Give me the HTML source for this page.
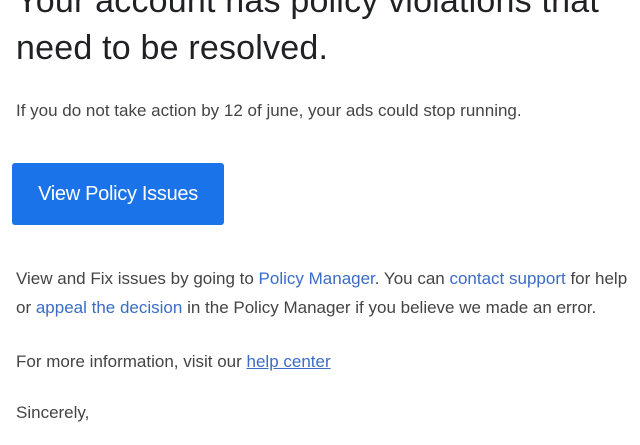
<!DOCTYPE html>
<html><head><meta charset="utf-8"><style>
html,body{margin:0;padding:0;background:#fff;width:640px;height:445px;overflow:hidden}
body{font-family:"Liberation Sans",sans-serif;position:relative}
.h{position:absolute;left:16px;font-size:34px;color:#202124;white-space:nowrap;letter-spacing:0.2px}
.t{position:absolute;left:16px;font-size:17px;color:#444;white-space:nowrap;letter-spacing:0px}
a{color:#3b6cc6;text-decoration:none}
.btn{position:absolute;left:12px;top:163px;width:212px;height:62px;background:#1a73e8;border-radius:3px;color:#fff;font-size:20px;text-align:center;line-height:62px;letter-spacing:-0.3px}
</style></head><body>
<div class="h" style="top:-18px">Your account has policy violations that</div>
<div class="h" style="top:29px">need to be resolved.</div>
<div class="t" style="top:101px">If you do not take action by 12 of june, your ads could stop running.</div>
<div class="btn">View Policy Issues</div>
<div class="t" style="top:269px">View and Fix issues by going to <a>Policy Manager</a>. You can <a>contact support</a> for help</div>
<div class="t" style="top:298px">or <a>appeal the decision</a> in the Policy Manager if you believe we made an error.</div>
<div class="t" style="top:352px">For more information, visit our <a style="text-decoration:underline">help center</a></div>
<div class="t" style="top:403px">Sincerely,</div>
</body></html>
